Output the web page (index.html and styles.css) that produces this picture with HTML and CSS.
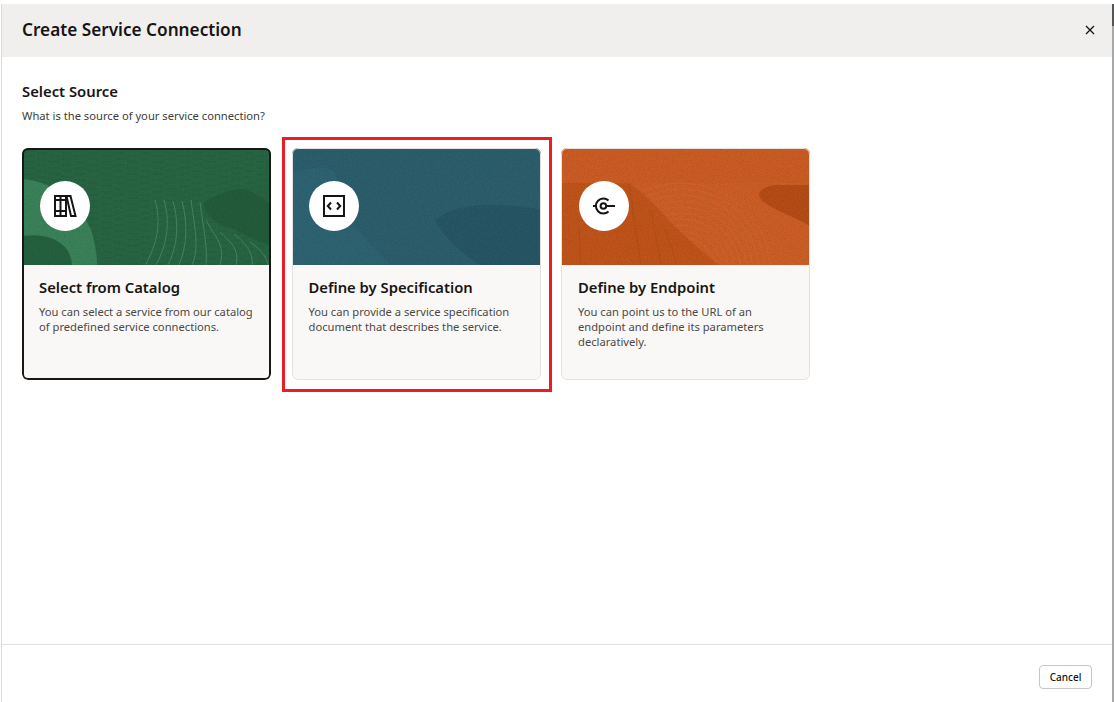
FILE: index.html
```html
<!DOCTYPE html>
<html lang="en">
  <head>
    <meta charset="UTF-8" />
    <title>Create Service Connection</title>
    <link rel="stylesheet" href="styles.css">
  </head>
  <body>
    <div class="dialog">
      <header class="dialog-header">
        <h1>Create Service Connection</h1>
        <button class="close-btn" aria-label="Close">
          <svg viewBox="0 0 10 10" width="10" height="10"><path d="M1 1l8 8M9 1l-8 8"/></svg>
        </button>
      </header>

      <main class="dialog-body">
        <h2>Select Source</h2>
        <p class="intro">What is the source of your service connection?</p>

        <div class="cards">
          <div class="card selected">
            <div class="card-art green">
              <svg class="art" viewBox="0 0 249 117" preserveAspectRatio="none">
                <defs>
                  <pattern id="dash" width="26" height="6" patternUnits="userSpaceOnUse">
                    <path d="M1 2h11M14 5h10" stroke="#235c3c" stroke-width=".8"/>
                  </pattern>
                  <filter id="grain">
                    <feTurbulence type="fractalNoise" baseFrequency=".8" numOctaves="2"/>
                    <feColorMatrix values="0 0 0 0 0 0 0 0 0 0 0 0 0 0 0 0 0 0 1.600 -.6"/>
                  </filter>
                </defs>
                <rect width="249" height="117" fill="url(#dash)"/>
                <path d="M0 31C30 33 56 52 69 82C73 94 75 106 75 117H0Z" fill="#3a8259"/>
                <path d="M0 88C20 85 38 90 46 103C48 108 50 112 50 117H0Z" fill="#24613f"/>
                <g fill="none" stroke="#5a9a79" stroke-width=".6">
                  <path d="M133 52C138 70 138 90 124 116"/>
                  <path d="M142 52C148 72 146 95 134 117"/>
                  <path d="M151 53C157 75 156 97 146 117"/>
                  <path d="M160 53C166 76 165 98 157 117"/>
                  <path d="M169 52C172 76 178 100 170 117"/>
                  <path d="M178 54C180 74 186 96 184 117"/>
                  <path d="M184 72C192 88 204 96 198 117"/>
                  <path d="M198 84C206 92 218 100 214 117"/>
                  <path d="M212 86C222 94 232 104 230 117"/>
                  <path d="M228 94C236 100 244 106 246 117"/>
                  <path d="M240 72L249 84"/>
                </g>
                <path d="M181 55C194 47 205 42 218 41C232 42 240 50 249 57V98C232 92 222 86 212 81C198 79 185 70 181 55Z" fill="#235c3b"/>
                <rect class="speckle" width="249" height="117" filter="url(#grain)"/>
              </svg>
              <span class="icon-circle">
                <svg viewBox="0 0 22 22" width="22" height="22">
                  <path d="M1 1h11v20H1zM6.500 1v20M1 5h11M1 16h11M12.500 1h4l5 20h-4.500z"/>
                </svg>
              </span>
            </div>
            <div class="card-text">
              <h3>Select from Catalog</h3>
              <p>You can select a service from our catalog of predefined service connections.</p>
            </div>
          </div>

          <div class="card">
            <div class="card-art teal">
              <svg class="art" viewBox="0 0 249 117" preserveAspectRatio="none">
                <path d="M0 24C15 20 30 18 40 22C48 28 46 40 38 48C50 70 80 95 98 117H0Z" fill="#2e6372"/>
                <path d="M143 72C155 62 175 57 195 57C215 57 235 58 249 62V117H188C170 106 152 90 143 72Z" fill="#275664"/>
                <rect class="speckle" width="249" height="117" filter="url(#grain)"/>
              </svg>
              <span class="icon-circle">
                <svg viewBox="0 0 22 22" width="22" height="22">
                  <path d="M1 1h20v20H1zM8 7.500L4.800 11 8 14.500M14 7.500l3.200 3.500-3.200 3.500"/>
                </svg>
              </span>
            </div>
            <div class="card-text">
              <h3>Define by Specification</h3>
              <p>You can provide a service specification document that describes the service.</p>
            </div>
          </div>

          <div class="card">
            <div class="card-art orange">
              <svg class="art" viewBox="0 0 249 117" preserveAspectRatio="none">
                <defs>
                  <clipPath id="slope">
                    <path d="M68 29H249V117H158C108 78 92 50 68 29Z"/>
                  </clipPath>
                </defs>
                <path d="M0 35H68C92 50 108 78 158 117H0Z" fill="#c0541a"/>
                <path d="M68 35C92 50 108 78 158 117H249V35Z" fill="#cc5e26"/>
                <g clip-path="url(#slope)" fill="none" stroke="#d26c36" stroke-width=".6">
                  <circle cx="120" cy="125" r="30"/>
                  <circle cx="120" cy="125" r="36"/>
                  <circle cx="120" cy="125" r="42"/>
                  <circle cx="120" cy="125" r="48"/>
                  <circle cx="120" cy="125" r="54"/>
                  <circle cx="120" cy="125" r="60"/>
                  <circle cx="120" cy="125" r="66"/>
                  <circle cx="120" cy="125" r="72"/>
                  <circle cx="120" cy="125" r="78"/>
                  <circle cx="120" cy="125" r="84"/>
                  <circle cx="120" cy="125" r="90"/>
                </g>
                <g fill="none" stroke="#b34c13" stroke-width=".8">
                  <path d="M68 36L80 117M90 62L100 117M104 80L116 117M18 80L20 117"/>
                </g>
                <path d="M249 37H215C203 38 195 44 199 50C206 60 232 68 249 78Z" fill="#b64c16"/>
                <rect class="speckle" width="249" height="117" filter="url(#grain)"/>
              </svg>
              <span class="icon-circle">
                <svg viewBox="0 0 22 22" width="22" height="22">
                  <circle cx="10.400" cy="11" r="2.800"/>
                  <path d="M13.200 11H22M15.500 5.500A7.500 7.500 0 1 0 15.500 16.500M3 11H0"/>
                </svg>
              </span>
            </div>
            <div class="card-text">
              <h3>Define by Endpoint</h3>
              <p>You can point us to the URL of an endpoint and define its parameters declaratively.</p>
            </div>
          </div>
        </div>
      </main>

      <footer class="dialog-footer">
        <button class="cancel-btn">Cancel</button>
      </footer>

      <div class="scroll-thumb"></div>
    </div>

    <div class="highlight"></div>
  </body>
</html>
```

FILE: styles.css
```css
* {
  box-sizing: border-box;
}

body {
  margin: 0;
  height: 702px;
  overflow: hidden;
  padding: 4px 0 0 1px;
  background-color: white;
  font-family: "Noto Sans", "Open Sans", sans-serif;
  color: #161513;
  position: relative;
}

.dialog {
  width: 1113px;
  height: 698px;
  display: flex;
  flex-direction: column;
  border-left: 1px solid #d9d9d9;
  border-right: 2px solid #a8a8a8;
  position: relative;
}

.dialog-header {
  height: 53px;
  flex: none;
  background-color: #f1efed;
  display: flex;
  justify-content: space-between;
  align-items: center;
  padding: 0 17px 2px 20px;
}

h1 {
  margin: 0;
  font-size: 17.200px;
  font-weight: 600;
}

.close-btn {
  background: none;
  border: none;
  padding: 0;
  display: flex;
}

.close-btn path {
  fill: none;
  stroke: #161513;
  stroke-width: 1.300;
}

.dialog-body {
  flex: 1;
  padding: 23px 20px 0;
}

h2 {
  margin: 0;
  font-size: 14.800px;
  line-height: 22px;
  font-weight: 600;
}

.intro {
  margin: 5px 0 0;
  font-size: 11.200px;
  line-height: 17px;
  color: #3e3c3a;
}

.cards {
  display: flex;
  gap: 20.500px;
  margin-top: 24px;
}

.card {
  width: 249px;
  height: 232px;
  border-radius: 6px;
  background-color: #faf8f7;
  overflow: hidden;
  position: relative;
}

.card::after {
  content: "";
  position: absolute;
  inset: 0;
  border: 1px solid #e4e2df;
  border-radius: 6px;
}

.card.selected::after {
  border: 2px solid #1a1816;
}

.card-art {
  height: 117px;
  padding: 33px 0 0 18px;
  position: relative;
}

.card-art.green {
  background-color: #286543;
}

.card-art.teal {
  background-color: #2c5e6c;
  padding-left: 17.500px;
}

.card-art.orange {
  background-color: #cb5c24;
}

.art {
  position: absolute;
  left: 0;
  top: 0;
  width: 100%;
  height: 100%;
}

.speckle {
  opacity: 0.12;
}

.icon-circle {
  width: 50px;
  height: 50px;
  border-radius: 50%;
  background-color: white;
  display: flex;
  justify-content: center;
  align-items: center;
  position: relative;
}

.icon-circle svg {
  overflow: visible;
}

.icon-circle path,
.icon-circle circle {
  fill: none;
  stroke: #161513;
  stroke-width: 2;
}

.card-text {
  padding: 11px 17px;
}

h3 {
  margin: 0;
  font-size: 14.800px;
  line-height: 22px;
  font-weight: 600;
}

.card-text p {
  margin: 6px 0 0;
  font-size: 11.200px;
  line-height: 15px;
  color: #4a4846;
}

.dialog-footer {
  height: 58px;
  flex: none;
  border-top: 1px solid #e2dfdc;
  display: flex;
  justify-content: flex-end;
  align-items: flex-start;
  padding: 20px 20px 0 0;
}

.cancel-btn {
  width: 53px;
  height: 24px;
  background-color: white;
  border: 1px solid #c9c6c2;
  border-radius: 4px;
  font-family: inherit;
  font-size: 10px;
  font-weight: 500;
  color: #161513;
  padding: 0;
}

.scroll-thumb {
  position: absolute;
  right: -2px;
  top: 0;
  width: 2px;
  height: 22px;
  background-color: #555;
}

.highlight {
  position: absolute;
  left: 282px;
  top: 137px;
  width: 270px;
  height: 255px;
  border: 3px solid #ed1c24;
}
```
